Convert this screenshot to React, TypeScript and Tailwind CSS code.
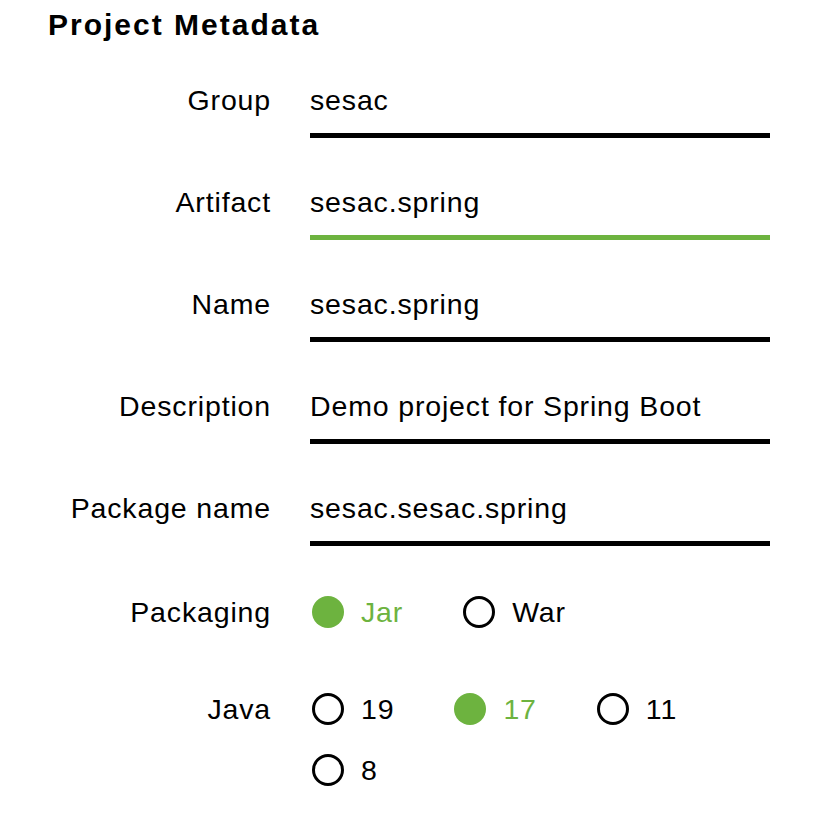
import React from 'react';

// ─── DATA ───

const fields = [
  { label: 'Group', value: 'sesac', focused: false },
  { label: 'Artifact', value: 'sesac.spring', focused: true },
  { label: 'Name', value: 'sesac.spring', focused: false },
  { label: 'Description', value: 'Demo project for Spring Boot', focused: false },
  { label: 'Package name', value: 'sesac.sesac.spring', focused: false },
];

const packaging = [
  { label: 'Jar', checked: true },
  { label: 'War', checked: false },
];

const java = [
  { label: '19', checked: false },
  { label: '17', checked: true },
  { label: '11', checked: false },
  { label: '8', checked: false },
];

// ─── PIECES ───

function Radio({ label, checked }: { label: string; checked: boolean }) {
  return (
    <label className="mr-[60px] flex h-8 items-center gap-[17px]">
      {checked ? (
        <span className="block h-8 w-8 rounded-full bg-[#6db33f]" />
      ) : (
        <span className="block h-8 w-8 rounded-full border-[3.5px] border-black" />
      )}
      <span className={checked ? 'text-[#6db33f]' : 'text-black'}>{label}</span>
    </label>
  );
}

export default function App() {
  return (
    <div
      className="min-h-screen w-[820px] bg-white pl-12 pt-[7px] text-[28.5px] tracking-[0.85px] text-black"
      style={{ fontFamily: '"Liberation Sans", Arial, sans-serif' }}
    >
      {/* ── Title ── */}
      <h1 className="h-9 text-[30px] font-bold leading-9 tracking-[2px]">Project Metadata</h1>

      <div className="mt-[41px] flex flex-col">
        {/* ── Text inputs ── */}
        {fields.map((f) => (
          <div key={f.label} className="mb-[48px] flex">
            <div className="w-[223px] text-right leading-8">{f.label}</div>
            <div
              className={`ml-[39px] w-[460px] border-b-[5px] pb-[17px] leading-8 ${
                f.focused ? 'border-[#6db33f]' : 'border-black'
              }`}
            >
              {f.value}
            </div>
          </div>
        ))}

        {/* ── Packaging ── */}
        <div className="mt-[2px] flex">
          <div className="w-[223px] text-right leading-8">Packaging</div>
          <div className="ml-[41px] flex w-[458px] flex-wrap">
            {packaging.map((p) => (
              <Radio key={p.label} {...p} />
            ))}
          </div>
        </div>

        {/* ── Java ── */}
        <div className="mt-[65px] flex">
          <div className="w-[223px] text-right leading-8">Java</div>
          <div className="ml-[41px] flex w-[458px] flex-wrap gap-y-[29px]">
            {java.map((j) => (
              <Radio key={j.label} {...j} />
            ))}
          </div>
        </div>
      </div>
    </div>
  );
}
